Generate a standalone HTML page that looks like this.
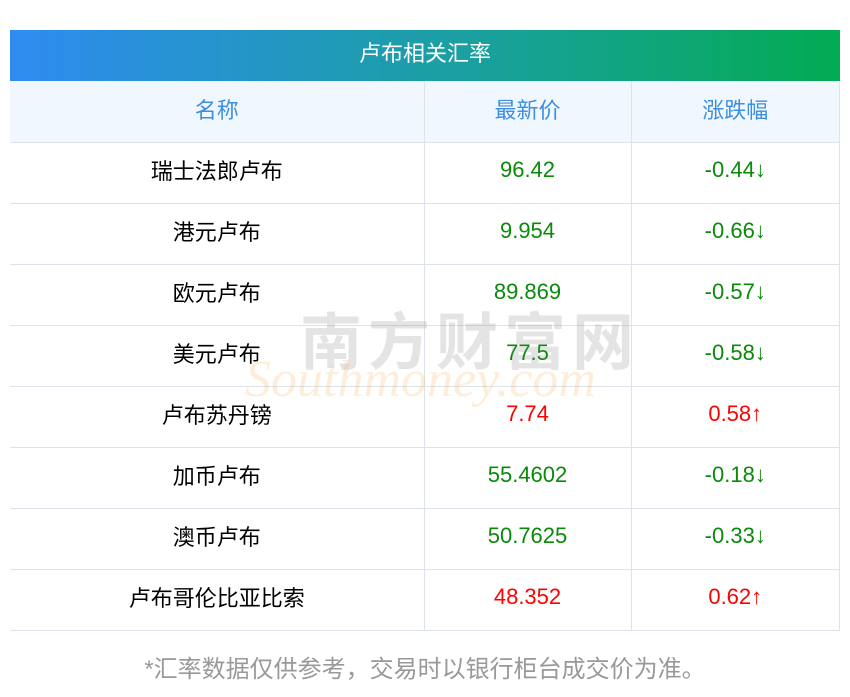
<!DOCTYPE html>
<html><head><meta charset="utf-8"><style>
body{margin:0;width:850px;height:697px;background:#fff;font-family:"Liberation Sans","Noto Sans CJK SC",sans-serif;position:relative;overflow:hidden}
.title{position:absolute;left:10px;top:30px;width:830px;height:52px;background:linear-gradient(90deg,#2f8bf1,#1aa0a0 55%,#03ab52);color:#fff;font-size:22px;line-height:48px;text-align:center}
table{position:absolute;left:10px;top:81px;width:830px;border-collapse:collapse;font-size:22px}
td{height:61px;border-bottom:1px solid #dde3ea;text-align:center;padding:0 0 5px 0;box-sizing:border-box}
td+td{border-left:1px solid #dde3ea}
td:last-child{border-right:1px solid #dde3ea}
tr.h td{background:#f1f7fe;color:#3d8fe0}
.g{color:#0a8a0a}.r{color:#f00}
.c1{width:414px}.c2{width:207px}
.foot{position:absolute;left:0;width:850px;top:649px;text-align:center;color:#999;font-size:24px}
.wm1{position:absolute;left:300px;top:292px;font-size:62px;color:rgba(120,120,120,.2);letter-spacing:6px;font-weight:bold}
.wm2{position:absolute;left:245px;top:350px;font-size:52px;font-style:italic;color:rgba(245,170,80,.2);font-family:"Liberation Serif",serif}
</style></head><body>
<div class="title">卢布相关汇率</div>
<table>
<tr class="h"><td class="c1">名称</td><td class="c2">最新价</td><td>涨跌幅</td></tr>
<tr><td>瑞士法郎卢布</td><td class="g">96.42</td><td class="g">-0.44↓</td></tr>
<tr><td>港元卢布</td><td class="g">9.954</td><td class="g">-0.66↓</td></tr>
<tr><td>欧元卢布</td><td class="g">89.869</td><td class="g">-0.57↓</td></tr>
<tr><td>美元卢布</td><td class="g">77.5</td><td class="g">-0.58↓</td></tr>
<tr><td>卢布苏丹镑</td><td class="r">7.74</td><td class="r">0.58↑</td></tr>
<tr><td>加币卢布</td><td class="g">55.4602</td><td class="g">-0.18↓</td></tr>
<tr><td>澳币卢布</td><td class="g">50.7625</td><td class="g">-0.33↓</td></tr>
<tr><td>卢布哥伦比亚比索</td><td class="r">48.352</td><td class="r">0.62↑</td></tr>
</table>
<div class="wm1">南方财富网</div>
<div class="wm2">Southmoney.com</div>
<div class="foot">*汇率数据仅供参考，交易时以银行柜台成交价为准。</div>
</body></html>
